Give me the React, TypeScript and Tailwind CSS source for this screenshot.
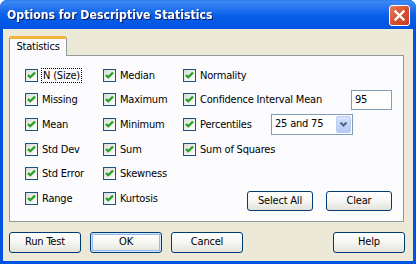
import React from 'react'

const font = { fontFamily: 'Tahoma, "DejaVu Sans Condensed", "Liberation Sans", sans-serif' }

function Check({ label, focus }: { label: string; focus?: boolean }) {
  return (
    <div className="flex items-center gap-[3px] h-[24.6px]">
      <span className="w-[13px] h-[13px] border border-[#1c5180] bg-gradient-to-br from-[#dcdcd7] to-white flex items-center justify-center shrink-0">
        <svg width="11" height="11" viewBox="0 0 11 11">
          <path d="M2 5 L4.2 7.3 L9 2.6" stroke="#21a121" strokeWidth="2.2" fill="none" />
        </svg>
      </span>
      <span className={focus ? 'border border-dotted border-black px-px leading-[13px]' : 'px-px leading-[13px]'}>
        {label}
      </span>
    </div>
  )
}

function Btn({ label, def }: { label: string; def?: boolean }) {
  return (
    <button
      className={
        'w-[72px] h-[21px] rounded-[3px] border border-[#003c74] bg-gradient-to-b from-white via-[#f6f6f3] to-[#e3e2da] text-[11px] text-black ' +
        (def ? 'shadow-[inset_0_0_0_1px_#cee7ff,inset_0_0_0_2px_#98b8ea]' : '')
      }
    >
      {label}
    </button>
  )
}

export default function App() {
  return (
    <div className="w-[416px] h-[264px] flex flex-col bg-[#0054e3] rounded-t-[7px] overflow-hidden" style={font}>
      {/* title bar */}
      <div className="h-[29px] flex items-center pl-[7px] pr-[6px] bg-gradient-to-b from-[#3d8bf5] via-[#0a5fea] to-[#0053e1] border-t border-[#2f7df0]">
        <span className="text-white font-bold text-[12.2px] drop-shadow-[1px_1px_0_#0a1f6a]">
          Options for Descriptive Statistics
        </span>
        <span className="ml-auto w-[21px] h-[21px] rounded-[3px] border border-white bg-gradient-to-br from-[#e87a5c] via-[#d8502f] to-[#c63d1e] flex items-center justify-center">
          <svg width="13" height="13" viewBox="0 0 13 13">
            <path d="M2.5 2.5 L10.5 10.5 M10.5 2.5 L2.5 10.5" stroke="white" strokeWidth="2.4" strokeLinecap="square" />
          </svg>
        </span>
      </div>

      {/* client area */}
      <div className="flex-1 mx-[3px] mb-[3px] bg-[#ece9d8] pl-[6px] pr-[9px] pt-[7px] pb-[8px] flex flex-col text-[11px] tracking-[-0.2px] text-black">
        <div className="h-[19px] flex">
          <div className="relative z-10 w-[58px] h-[20px] bg-[#fcfcfe] border-x border-[#919b9c] border-t-[3px] border-t-[#f3b33b] rounded-t-[3px] flex items-center justify-center">
            Statistics
          </div>
        </div>
        <div className="h-[167px] border border-[#919b9c] bg-[#fcfcfe] flex pl-[15px] pr-[11px] pt-[7px]">
          <div className="w-[78px] flex flex-col">
            <Check label="N (Size)" focus />
            <Check label="Missing" />
            <Check label="Mean" />
            <Check label="Std Dev" />
            <Check label="Std Error" />
            <Check label="Range" />
          </div>
          <div className="w-[80px] flex flex-col">
            <Check label="Median" />
            <Check label="Maximum" />
            <Check label="Minimum" />
            <Check label="Sum" />
            <Check label="Skewness" />
            <Check label="Kurtosis" />
          </div>
          <div className="flex-1 flex flex-col">
            <Check label="Normality" />
            <div className="flex items-center h-[24.6px]">
              <Check label="Confidence Interval Mean" />
              <div className="ml-auto w-[41px] h-[20px] border border-[#7f9db9] bg-white flex items-center pl-[3px]">95</div>
            </div>
            <div className="flex items-center h-[24.6px]">
              <div className="w-[88px]">
                <Check label="Percentiles" />
              </div>
              <div className="w-[82px] h-[21px] border border-[#7f9db9] bg-white flex items-center pl-[3px] pr-px">
                <span>25 and 75</span>
                <span className="ml-auto w-[15px] h-[17px] rounded-[2px] bg-gradient-to-b from-[#d6e3fd] to-[#b3c9f6] border border-[#bccbf0] flex items-center justify-center">
                  <svg width="9" height="7" viewBox="0 0 9 7">
                    <path d="M1.5 1.5 L4.5 4.5 L7.5 1.5" stroke="#4d6185" strokeWidth="2" fill="none" />
                  </svg>
                </span>
              </div>
            </div>
            <Check label="Sum of Squares" />
            <div className="mt-auto mb-[10px] flex justify-end gap-[13px]">
              <button className="w-[66px] h-[20px] rounded-[3px] border border-[#003c74] bg-gradient-to-b from-white via-[#f6f6f3] to-[#e3e2da]">Select All</button>
              <button className="w-[66px] h-[20px] rounded-[3px] border border-[#003c74] bg-gradient-to-b from-white via-[#f6f6f3] to-[#e3e2da]">Clear</button>
            </div>
          </div>
        </div>
        <div className="mt-[10px] flex gap-[9px]">
          <Btn label="Run Test" />
          <Btn label="OK" def />
          <Btn label="Cancel" />
          <div className="ml-auto mr-[-1px]">
            <Btn label="Help" />
          </div>
        </div>
      </div>
    </div>
  )
}
